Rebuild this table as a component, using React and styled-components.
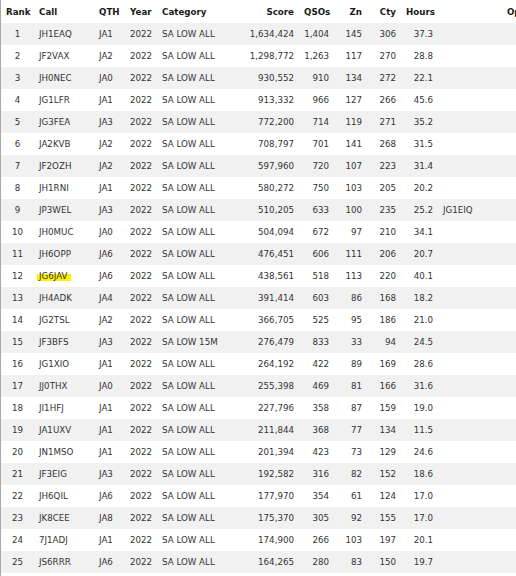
import React from "react"
import styled, { createGlobalStyle } from "styled-components"

const GlobalStyle = createGlobalStyle`
  html, body {
    margin: 0;
    padding: 0;
    background: #ffffff;
  }
  body {
    font-family: "DejaVu Sans", Verdana, sans-serif;
  }
`

const Frame = styled.div`
  width: 516px;
  height: 576px;
  overflow: hidden;
  box-sizing: border-box;
  border-left: 1px solid #a8a8a8;
  background: #fff;
`

const Table = styled.table`
  width: 624px;
  table-layout: fixed;
  border-collapse: collapse;
  font-size: 8.7px;
  color: #333333;
`

const Row = styled.tr`
  height: 22px;
  background: ${(p) => (p.$shaded ? "#f1f1f1" : "#ffffff")};
`

const HeadRow = styled.tr`
  height: 23px;
`

const Th = styled.th`
  padding: 0 5px;
  font-weight: bold;
  color: #1a1a1a;
  white-space: nowrap;
  text-align: ${(p) => p.$align || "left"};
`

const Td = styled.td`
  padding: 0 5px;
  white-space: nowrap;
  text-align: ${(p) => p.$align || "left"};
`

const Mark = styled.span`
  background: linear-gradient(to bottom, transparent 28%, #fff200 28%, #fff200 96%, transparent 96%);
  padding: 0 3px 0 2px;
  margin-left: -2px;
`

const columns = [
  { key: "rank", label: "Rank", width: 33, align: "center" },
  { key: "call", label: "Call", width: 60 },
  { key: "qth", label: "QTH", width: 31 },
  { key: "year", label: "Year", width: 32 },
  { key: "cat", label: "Category", width: 80 },
  { key: "score", label: "Score", width: 62, align: "right" },
  { key: "qsos", label: "QSOs", width: 35, align: "right" },
  { key: "zn", label: "Zn", width: 33, align: "right" },
  { key: "cty", label: "Cty", width: 34, align: "right" },
  { key: "hours", label: "Hours", width: 37, align: "right" },
  { key: "op", label: "Operators", width: 187, align: "center", dataAlign: "left" },
]

const raw = `JH1EAQ|JA1|SA LOW ALL|1,634,424|1,404|145|306|37.3|
JF2VAX|JA2|SA LOW ALL|1,298,772|1,263|117|270|28.8|
JH0NEC|JA0|SA LOW ALL|930,552|910|134|272|22.1|
JG1LFR|JA1|SA LOW ALL|913,332|966|127|266|45.6|
JG3FEA|JA3|SA LOW ALL|772,200|714|119|271|35.2|
JA2KVB|JA2|SA LOW ALL|708,797|701|141|268|31.5|
JF2OZH|JA2|SA LOW ALL|597,960|720|107|223|31.4|
JH1RNI|JA1|SA LOW ALL|580,272|750|103|205|20.2|
JP3WEL|JA3|SA LOW ALL|510,205|633|100|235|25.2|JG1EIQ
JH0MUC|JA0|SA LOW ALL|504,094|672|97|210|34.1|
JH6OPP|JA6|SA LOW ALL|476,451|606|111|206|20.7|
JG6JAV|JA6|SA LOW ALL|438,561|518|113|220|40.1|
JH4ADK|JA4|SA LOW ALL|391,414|603|86|168|18.2|
JG2TSL|JA2|SA LOW ALL|366,705|525|95|186|21.0|
JF3BFS|JA3|SA LOW 15M|276,479|833|33|94|24.5|
JG1XIO|JA1|SA LOW ALL|264,192|422|89|169|28.6|
JJ0THX|JA0|SA LOW ALL|255,398|469|81|166|31.6|
JI1HFJ|JA1|SA LOW ALL|227,796|358|87|159|19.0|
JA1UXV|JA1|SA LOW ALL|211,844|368|77|134|11.5|
JN1MSO|JA1|SA LOW ALL|201,394|423|73|129|24.6|
JF3EIG|JA3|SA LOW ALL|192,582|316|82|152|18.6|
JH6QIL|JA6|SA LOW ALL|177,970|354|61|124|17.0|
JK8CEE|JA8|SA LOW ALL|175,370|305|92|155|17.0|
7J1ADJ|JA1|SA LOW ALL|174,900|266|103|197|20.1|
JS6RRR|JA6|SA LOW ALL|164,265|280|83|150|19.7|`

const results = raw.split("\n").map((line, i) => {
  const [call, qth, cat, score, qsos, zn, cty, hours, op] = line.split("|")
  return { rank: i + 1, call, qth, year: "2022", cat, score, qsos, zn, cty, hours, op }
})

const highlighted = "JG6JAV"

const App = () => {
  return (
    <Frame>
      <GlobalStyle />
      <Table>
        <colgroup>
          {columns.map((c) => (
            <col key={c.key} style={{ width: c.width }} />
          ))}
        </colgroup>
        <thead>
          <HeadRow>
            {columns.map((c) => (
              <Th key={c.key} $align={c.align}>
                {c.label}
              </Th>
            ))}
          </HeadRow>
        </thead>
        <tbody>
          {results.map((r, i) => (
            <Row key={r.call} $shaded={i % 2 === 0}>
              {columns.map((c) => (
                <Td key={c.key} $align={c.dataAlign || c.align}>
                  {c.key === "call" && r.call === highlighted ? <Mark>{r.call}</Mark> : r[c.key]}
                </Td>
              ))}
            </Row>
          ))}
        </tbody>
      </Table>
    </Frame>
  )
}

export default App
